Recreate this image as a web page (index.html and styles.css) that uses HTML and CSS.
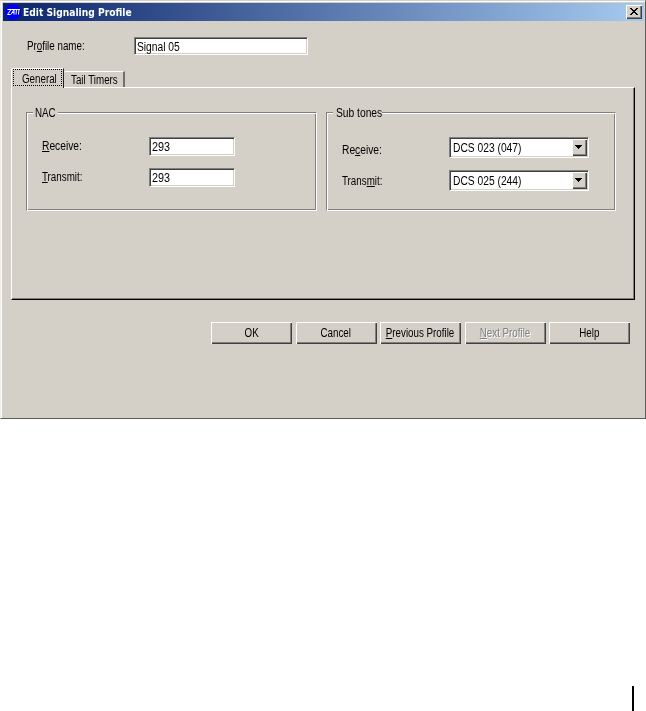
FILE: index.html
```html
<!DOCTYPE html>
<html lang="en">
<head>
<meta charset="utf-8">
<title>Edit Signaling Profile</title>
<link rel="stylesheet" href="styles.css">
</head>
<body>
<div class="page">
  <section class="window">
    <header class="titlebar">
      <svg class="logo" width="16" height="16" viewBox="0 0 16 16"><circle cx="8" cy="8" r="8" fill="#0000f5"/><path d="M2.5 5.5H15M6 5.5L2.5 10.5H5.5M6 10.5L9 5.5V10.5M7 8.5H9M11.5 5.5L11 10.5M14 5.5L13.5 10.5" fill="none" stroke="#fff"/></svg>
      <h1 class="title"><span class="t">Edit Signaling Profile</span></h1>
      <div class="close"><svg width="16" height="14" viewBox="0 0 16 14" shape-rendering="crispEdges"><path d="M4 3h2v1h1v1h2v-1h1v-1h2v1h-1v1h-1v1h-1v1h1v1h1v1h1v1h-2v-1h-1v-1h-2v1h-1v1h-2v-1h1v-1h1v-1h1v-1h-1v-1h-1v-1h-1z"/></svg></div>
    </header>
    <div class="name-row">
      <label class="label"><span class="t">Pr<u>o</u>file name:</span></label>
      <div class="input name"><span class="t wide">Signal 05</span></div>
    </div>
    <nav class="tabs">
      <div class="tab active"><div class="focus"><span class="t">General</span></div></div>
      <div class="tab idle"><span class="t">Tail Timers</span></div>
    </nav>
    <main class="panel">
      <section class="group nac">
        <h2 class="legend"><span class="t">NAC</span></h2>
        <div class="row"><label class="label"><span class="t wide"><u>R</u>eceive:</span></label><div class="input"><span class="t digits">293</span></div></div>
        <div class="row"><label class="label"><span class="t"><u>T</u>ransmit:</span></label><div class="input"><span class="t digits">293</span></div></div>
      </section>
      <section class="group tones">
        <h2 class="legend"><span class="t wide">Sub tones</span></h2>
        <div class="row"><label class="label"><span class="t wide">Re<u>c</u>eive:</span></label><div class="input combo"><span class="t wide">DCS 023 (047)</span><div class="drop"><svg width="14" height="15" viewBox="0 0 14 15" shape-rendering="crispEdges"><path d="M3 5h7v1h-1v1h-1v1h-1v1h-1v-1h-1v-1h-1v-1h-1z"/></svg></div></div></div>
        <div class="row"><label class="label"><span class="t">Trans<u>m</u>it:</span></label><div class="input combo"><span class="t wide">DCS 025 (244)</span><div class="drop"><svg width="14" height="15" viewBox="0 0 14 15" shape-rendering="crispEdges"><path d="M3 5h7v1h-1v1h-1v1h-1v1h-1v-1h-1v-1h-1v-1h-1z"/></svg></div></div></div>
      </section>
    </main>
    <footer class="actions">
      <div class="button"><span class="t">OK</span></div>
      <div class="button"><span class="t">Cancel</span></div>
      <div class="button"><span class="t"><u>P</u>revious Profile</span></div>
      <div class="button disabled"><span class="t"><u>N</u>ext Profile</span></div>
      <div class="button"><span class="t">Help</span></div>
    </footer>
  </section>
  <div class="change-bar"></div>
</div>
</body>
</html>
```
FILE: styles.css
```css
* { box-sizing: border-box; }
body { margin: 0; background: #fff; overflow: hidden; }
.page {
  width: 646px; height: 711px;
  display: flex; flex-direction: column; justify-content: space-between;
  font: 12px/14px "Liberation Sans", Arial, sans-serif; color: #000;
}
.window {
  height: 419px; padding: 1px;
  background: #d4d0c8;
  border: 1px solid; border-color: #d4d0c8 #5c5c5c #5c5c5c #ecebe7;
  box-shadow: inset 1px 1px #fff;
}
h1, h2 { margin: 0; font-weight: normal; font-size: 12px; }
svg { display: block; }
u { text-decoration-thickness: 1px; text-underline-offset: 1px; text-decoration-skip-ink: none; }
.t { display: inline-block; white-space: nowrap; transform: scaleX(.815); transform-origin: left; }
.t.wide { transform: scaleX(.855); }
.t.digits { transform: scaleX(.9); }

.titlebar {
  height: 18px; margin: 1px 0 0 1px; padding: 0 2px;
  display: flex; align-items: center;
  background: linear-gradient(to right, #0a246a, #a6caf0);
  color: #fff;
}
.title { flex: 1; height: 16px; margin-left: 2px; font: bold 11px/17px "DejaVu Sans Condensed", "DejaVu Sans", sans-serif; }
.title .t { transform: scaleX(.925); }
.close {
  width: 16px; height: 14px; background: #d4d0c8;
  box-shadow: inset 1px 1px #fff, inset -1px -1px #404040, inset -2px -2px #808080;
}

.name-row { display: flex; margin: 16px 0 0 25px; }
.name-row .label { width: 107px; padding-top: 2px; }
.input {
  width: 86px; height: 19px; padding: 1px 0 0 2px;
  background: #fff;
  border: 1px solid; border-color: #808080 #fff #fff #808080;
  box-shadow: inset 1px 1px #404040, inset -1px -1px #d4d0c8;
  display: flex; align-items: center;
}
.input.name { width: 174px; height: 18px; }

.tabs { display: flex; align-items: flex-end; height: 20px; margin: 12px 0 0 9px; }
.tab { border-top: 1px solid #fff; border-left: 1px solid #fff; border-top-left-radius: 2px; }
.active {
  position: relative; z-index: 1;
  width: 53px; height: 20px; margin-bottom: -1px; padding: 0 1px 1px;
  background: #d4d0c8; border-right: 1px solid #202020;
}
.focus { height: 17px; border: 1px dotted #000; padding: 2px 0 0 8px; }
.idle { width: 61px; height: 16px; padding: 1px 0 0 7px; border-left: 0; border-right: 2px solid #707070; }

.panel {
  width: 624px; height: 213px; margin-left: 9px; padding: 24px 0 0 14px;
  display: flex; gap: 9px;
  border: 1px solid; border-color: #fff #000 #000 #fff;
  box-shadow: inset -1px -1px #808080;
}
.group {
  width: 291px; height: 99px;
  border: 1px solid; border-color: #808080 #fff #fff #808080;
  box-shadow: inset 1px 1px #fff, inset -1px -1px #808080;
}
.group.tones { width: 290px; }
.legend { height: 14px; margin: -7px 0 0 6px; padding-left: 2px; background: #d4d0c8; line-height: 14px; }
.nac .legend { width: 25px; }
.tones .legend { width: 49px; padding-left: 3px; }
.row { display: flex; margin-left: 15px; }
.row .label { width: 107px; padding-top: 2px; }
.nac .row { margin-top: 12px; }
.nac .legend + .row { margin-top: 17px; }
.tones .row { margin-top: 12px; }
.tones .legend + .row { margin-top: 17px; }
.tones .row .label { padding-top: 6px; }
.tones .row + .row .label { padding-top: 4px; }
.combo { width: 140px; height: 21px; padding: 0 1px 0 3px; justify-content: space-between; }
.drop {
  width: 15px; height: 17px; padding-top: 1px; background: #d4d0c8;
  box-shadow: inset 1px 1px #fff, inset -1px -1px #404040, inset -2px -2px #808080;
}

.actions { display: flex; gap: 3.5px; margin: 22px 0 0 209px; }
.button {
  width: 81px; height: 22px;
  display: flex; justify-content: center; align-items: center;
  box-shadow: inset 1px 1px #fff, inset -1px -1px #404040, inset -2px -2px #808080;
}
.button .t { transform-origin: center; }
.disabled { color: #808080; text-shadow: 1px 1px #fff; }

.change-bar { width: 2px; height: 25px; margin-left: 632px; background: #000; }
```
